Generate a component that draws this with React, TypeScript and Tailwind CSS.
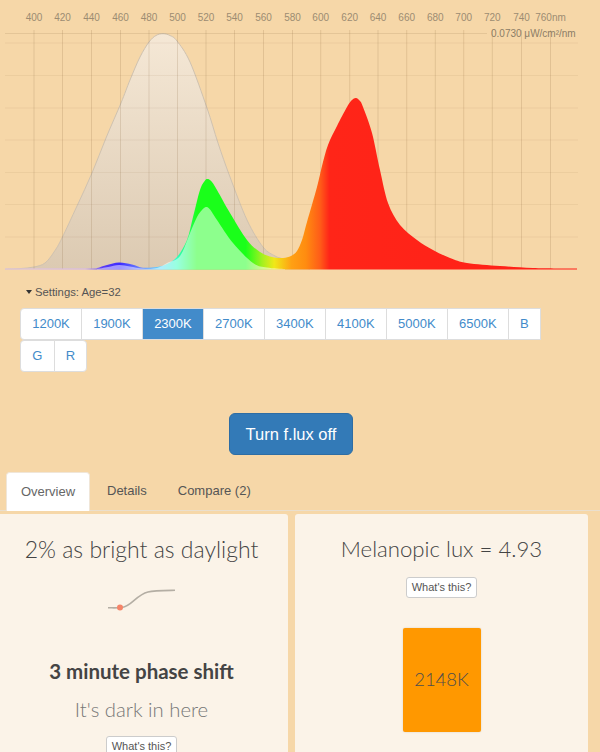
const WAVELENGTHS = [400, 420, 440, 460, 480, 500, 520, 540, 560, 580, 600, 620, 640, 660, 680, 700, 720, 740, 760];
const GRID_X = [34, 62.5, 91.5, 120.5, 149, 177.5, 206, 234.5, 263.5, 292.5, 320.7, 349.7, 378, 406.7, 435.3, 463.7, 492.3, 521.5, 550.5];
const GRID_Y = [43, 75.5, 108, 140, 172.5, 204.5, 237];
const TEMPS = ["1200K", "1900K", "2300K", "2700K", "3400K", "4100K", "5000K", "6500K", "B", "G", "R"];

type Pt = [number, number];

const MELANOPIC: Pt[] = [
  [5, 269], [20, 268.6], [34, 267], [45, 263], [54, 252], [62, 238], [77, 206], [92, 173], [106, 138], [121, 103],
  [130, 80], [140, 57], [149, 42], [156, 35.5], [163, 33.7], [170, 35.5], [177, 41], [190, 62], [207, 108], [218, 143], [230, 177],
  [247, 220], [263, 247], [275, 256], [283, 259], [295, 265], [310, 269],
];

const SPECTRUM: Pt[] = [
  [5, 268.6], [90, 268.4], [97, 268], [107, 265], [119, 262.5], [132, 264.5], [143, 267.7], [157, 267], [167, 264], [177, 257],
  [187, 240], [193, 217], [200, 190], [205, 180.5], [208, 179], [212, 182], [217, 190], [230, 213], [247, 240], [260, 252], [272, 257], [283, 258],
  [291, 256], [297, 251], [302, 240], [307, 222], [317, 187], [322, 166], [328, 145], [337, 126], [347, 107], [352, 100],
  [356, 98], [360, 101], [363, 107], [372, 133], [380, 170], [388, 203], [400, 225], [417, 240], [433, 250], [450, 258],
  [467, 263], [500, 266], [533, 268], [577, 268.6],
];

const INNER: Pt[] = [
  [97, 269], [108, 267], [119, 265], [130, 266.5], [143, 268.6], [157, 268], [167, 263], [180, 256], [190, 233], [197, 217],
  [202, 210], [206, 207], [210, 209.5], [217, 220], [233, 243], [253, 263], [267, 267.5], [285, 269],
];

function smooth(pts: Pt[]) {
  let d = `M${pts[0][0]} ${pts[0][1]}`;
  for (let i = 0; i < pts.length - 1; i++) {
    const p0 = pts[Math.max(i - 1, 0)];
    const p1 = pts[i];
    const p2 = pts[i + 1];
    const p3 = pts[Math.min(i + 2, pts.length - 1)];
    const c1x = p1[0] + (p2[0] - p0[0]) / 6;
    const c1y = p1[1] + (p2[1] - p0[1]) / 6;
    const c2x = p2[0] - (p3[0] - p1[0]) / 6;
    const c2y = p2[1] - (p3[1] - p1[1]) / 6;
    d += ` C${c1x.toFixed(1)} ${c1y.toFixed(1)} ${c2x.toFixed(1)} ${c2y.toFixed(1)} ${p2[0]} ${p2[1]}`;
  }
  return d;
}

function closed(pts: Pt[]) {
  return `${smooth(pts)} L${pts[pts.length - 1][0]} 269.5 L${pts[0][0]} 269.5 Z`;
}

function SpectrumChart() {
  return (
    <svg width="600" height="282" viewBox="0 0 600 282" className="block">
      <defs>
        <linearGradient id="melanopic" x1="0" y1="33" x2="0" y2="269" gradientUnits="userSpaceOnUse">
          <stop offset="0" stopColor="#f5e8d6" />
          <stop offset="1" stopColor="#dccab2" />
        </linearGradient>
        <linearGradient id="rainbow" x1="5" y1="0" x2="578" y2="0" gradientUnits="userSpaceOnUse">
          <stop offset="0" stopColor="#e6c8e0" />
          <stop offset="0.14" stopColor="#d8b8f0" />
          <stop offset="0.17" stopColor="#5a3cf5" />
          <stop offset="0.2" stopColor="#3c2cff" />
          <stop offset="0.235" stopColor="#6a80ff" />
          <stop offset="0.27" stopColor="#60d8ff" />
          <stop offset="0.3" stopColor="#30ffc0" />
          <stop offset="0.335" stopColor="#1aff1a" />
          <stop offset="0.42" stopColor="#1aff1a" />
          <stop offset="0.45" stopColor="#a8f020" />
          <stop offset="0.47" stopColor="#f0e818" />
          <stop offset="0.5" stopColor="#ffa014" />
          <stop offset="0.525" stopColor="#ff8c10" />
          <stop offset="0.55" stopColor="#ff5c18" />
          <stop offset="0.566" stopColor="#ff2518" />
          <stop offset="1" stopColor="#ff2018" />
        </linearGradient>
      </defs>
      {WAVELENGTHS.map((w, i) => (
        <text key={w} x={GRID_X[i]} y="21" textAnchor="middle" fontSize="10" fill="#9c8c72" fontFamily="Liberation Sans, sans-serif">
          {i === 18 ? "760nm" : w}
        </text>
      ))}
      <text x="491" y="37" fontSize="10" fill="#8c7d66" fontFamily="Liberation Sans, sans-serif">
        0.0730 μW/cm²/nm
      </text>
      <path d={closed(MELANOPIC)} fill="url(#melanopic)" />
      <path d={smooth(MELANOPIC)} fill="none" stroke="#cfc2b0" strokeWidth="1" />
      {GRID_X.map((x) => (
        <line key={x} x1={x} y1="30" x2={x} y2="269" stroke="#7a5a30" strokeOpacity="0.17" />
      ))}
      <line x1="5" y1="33.5" x2="487" y2="33.5" stroke="#7a5a30" strokeOpacity="0.14" />
      {GRID_Y.map((y) => (
        <line key={y} x1="5" y1={y} x2="578" y2={y} stroke="#7a5a30" strokeOpacity="0.08" />
      ))}
      <path d={closed(SPECTRUM)} fill="url(#rainbow)" />
      <path d={closed(INNER)} fill="#ffffff" fillOpacity="0.5" />
    </svg>
  );
}

function WhatsThis() {
  return (
    <button className="h-[21px] w-[71px] shrink-0 rounded-[3px] border border-[#cccccc] bg-white font-['Liberation_Sans',sans-serif] text-[11px] leading-none text-[#555555]">
      What's this?
    </button>
  );
}

export default function App() {
  return (
    <div className="h-[752px] w-[600px] overflow-hidden bg-[#f6d7a8] font-['Liberation_Sans',sans-serif]">
      <SpectrumChart />

      <div className="flex h-[20px] items-center pl-[26px] text-[11.3px] text-[#555555]">
        <span className="mr-[3px] h-0 w-0 border-x-[3.5px] border-t-[4px] border-x-transparent border-t-[#333333]" />
        Settings: Age=32
      </div>

      <div className="mt-[6px] ml-[20px] flex w-[525px] flex-wrap text-[13px] text-[#428bca]">
        {TEMPS.map((t) => (
          <button
            key={t}
            className={
              "-mr-px h-[32px] border border-[#dddddd] px-[11.2px] first:rounded-l-[4px] nth-[10]:rounded-l-[4px] last:rounded-r-[4px] " +
              (t === "2300K" ? "z-10 border-[#428bca] bg-[#428bca] text-white" : "bg-white")
            }
          >
            {t}
          </button>
        ))}
      </div>

      <div className="mt-[41px] flex pl-[229px]">
        <button className="h-[42px] w-[124px] rounded-[6px] border border-[#2e6da4] bg-[#337ab7] text-[16.5px] text-white">
          Turn f.lux off
        </button>
      </div>

      <div className="mt-[17px] flex h-[39px] border-b border-[#eadfce] pl-[6px] text-[13px] text-[#555555]">
        <div className="flex h-[39px] w-[84px] items-center justify-center rounded-t-[4px] border border-b-0 border-[#f0e6d8] bg-white text-[#666666]">
          Overview
        </div>
        <div className="ml-[17px] flex items-center">Details</div>
        <div className="ml-[31px] flex items-center">Compare (2)</div>
      </div>

      <div className="mt-[3px] flex gap-[7px] font-['Lato',sans-serif] text-[#444444]">
        <div className="flex h-[260px] w-[288px] flex-col items-center rounded-tr-[3px] bg-[#fbf3e8] pr-[5px]">
          <div className="mt-[21px] text-[23px] leading-[28px] font-light text-[#444444]">2% as bright as daylight</div>
          <svg width="70" height="24" viewBox="0 0 70 24" className="mt-[25px] ml-[-1px] block shrink-0">
            <path d="M2 19.8 C8 19.8 12 20 16 19.5 C26 18 30 7 42 4 C48 2.5 58 2.5 69 2.3" fill="none" stroke="#b4aea4" strokeWidth="1.6" />
            <circle cx="14" cy="19.5" r="3" fill="#f58468" />
          </svg>
          <div className="mt-[46px] text-[20.5px] leading-[26px] font-bold text-[#444444]">3 minute phase shift</div>
          <div className="mt-[12px] text-[20.3px] leading-[26px] font-light text-[#777777]">It's dark in here</div>
          <div className="mt-[14px] flex">
            <WhatsThis />
          </div>
        </div>

        <div className="flex h-[260px] w-[293px] flex-col items-center rounded-t-[3px] bg-[#fbf3e8]">
          <div className="mt-[21px] text-[22.2px] leading-[28px] font-light text-[#444444]">Melanopic lux = 4.93</div>
          <div className="mt-[14px] flex">
            <WhatsThis />
          </div>
          <div className="mt-[30px] flex h-[104px] w-[78px] shrink-0 items-center justify-center rounded-[2px] bg-[#ff9800] text-[18.5px] font-light text-[#4d4d4d] shadow-[0_0_2px_rgba(0,0,0,0.15)]">
            2148K
          </div>
        </div>
      </div>
    </div>
  );
}
